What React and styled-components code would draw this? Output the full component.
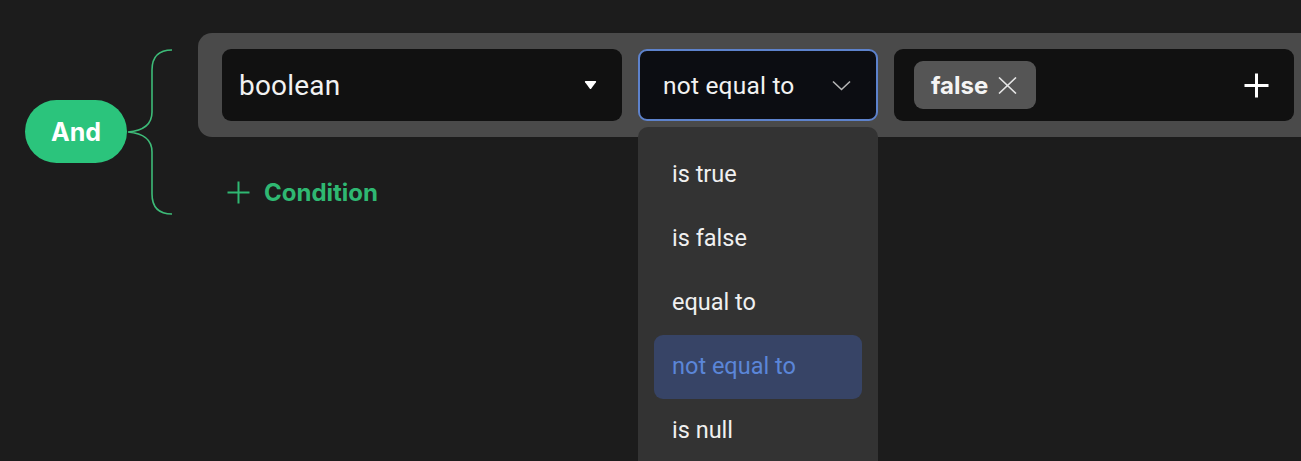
import React from "react";
import styled, { createGlobalStyle } from "styled-components";

const Global = createGlobalStyle`
  html, body { margin: 0; padding: 0; background: #1c1c1c; overflow: hidden; }
  body { font-family: Roboto, "Noto Sans", sans-serif; color: #fff; }
`;

const Page = styled.div`
  display: flex;
  align-items: flex-start;
  padding: 33px 0 0 25px;
  width: 1301px;
  height: 461px;
  box-sizing: border-box;
  overflow: hidden;
`;

const Pill = styled.div`
  margin-top: 67px;
  width: 102px;
  height: 63px;
  border-radius: 32px;
  background: #2bc47c;
  display: flex;
  align-items: center;
  justify-content: center;
  font-family: Inter, sans-serif;
  font-weight: 700;
  font-size: 25px;
  color: #fff;
  flex-shrink: 0;
`;

const Bracket = styled.svg`
  margin-top: 16px;
  flex-shrink: 0;
  display: block;
`;

const Group = styled.div`
  display: flex;
  flex-direction: column;
  flex-shrink: 0;
`;

const Panel = styled.div`
  display: flex;
  gap: 16px;
  padding: 16px 24px;
  background: #4a4a4a;
  border-radius: 14px;
  width: 1120px;
  box-sizing: border-box;
`;

const Box = styled.div`
  position: relative;
  height: 72px;
  width: ${(p) => p.$w}px;
  box-sizing: border-box;
  background: ${(p) => (p.$active ? "#0c0d12" : "#111")};
  border: ${(p) => (p.$active ? "2px solid #5d82cc" : "none")};
  border-radius: 9px;
  display: flex;
  align-items: center;
  padding: 0 ${(p) => p.$pr}px 0 ${(p) => p.$pl}px;
  justify-content: space-between;
`;

const FieldText = styled.span`
  font-size: ${(p) => p.$size}px;
  color: #f2f2f2;
  letter-spacing: 0.2px;
`;

const Chip = styled.div`
  height: 48px;
  box-sizing: border-box;
  padding: 0 19px 0 17px;
  background: #555;
  border-radius: 9px;
  display: flex;
  align-items: center;
  gap: 10px;
  font-family: Inter, sans-serif;
  font-weight: 700;
  font-size: 24px;
  color: #f4f4f4;
`;

const Menu = styled.div`
  position: absolute;
  left: -2px;
  top: 76px;
  width: 240px;
  height: 360px;
  background: #333;
  border-radius: 10px;
  padding: 16px;
  box-sizing: border-box;
  display: flex;
  flex-direction: column;
  z-index: 5;
`;

const Item = styled.div`
  height: 64px;
  flex-shrink: 0;
  border-radius: 9px;
  display: flex;
  align-items: center;
  padding-left: 18px;
  padding-bottom: 2px;
  box-sizing: border-box;
  font-size: 23.5px;
  color: ${(p) => (p.$selected ? "#5b86d8" : "#f0f0f0")};
  background: ${(p) => (p.$selected ? "#374466" : "transparent")};
`;

const AddRow = styled.div`
  margin-top: 41px;
  margin-left: 29px;
  display: flex;
  align-items: center;
  gap: 14px;
  font-family: Inter, sans-serif;
  font-weight: 700;
  font-size: 24px;
  color: #2fb872;
`;

const items = ["is true", "is false", "equal to", "not equal to", "is null"];

export default function App() {
  return (
    <>
      <Global />
      <Page>
        <Pill>And</Pill>
        <Bracket width="71" height="166" viewBox="127 49 71 166">
          <path
            d="M172 50 Q152 50 152 70 V112 Q152 130 128 132 Q152 134 152 152 V194 Q152 214 172 214"
            fill="none"
            stroke="#3dbb78"
            strokeWidth="1.6"
          />
        </Bracket>
        <Group>
          <Panel>
            <Box $w={400} $pl={17} $pr={25}>
              <FieldText $size={28}>boolean</FieldText>
              <svg width="13" height="10" viewBox="0 0 13 10">
                <path d="M1.6 1 H11.4 Q12.7 1 11.9 2.2 L7.3 8.4 Q6.5 9.4 5.7 8.4 L1.1 2.2 Q0.3 1 1.6 1 Z" fill="#fff" />
              </svg>
            </Box>
            <Box $w={240} $pl={23} $pr={25} $active>
              <FieldText $size={24.5}>not equal to</FieldText>
              <svg width="19" height="11" viewBox="0 0 19 11">
                <path d="M1 1.5 L9.5 9.5 L18 1.5" fill="none" stroke="#b5b5b5" strokeWidth="1.6" />
              </svg>
              <Menu>
                {items.map((t) => (
                  <Item key={t} $selected={t === "not equal to"}>{t}</Item>
                ))}
              </Menu>
            </Box>
            <Box $w={400} $pl={20} $pr={25}>
              <Chip>
                false
                <svg width="19" height="17" viewBox="0 0 19 17">
                  <path d="M1 0.5 L18 16.5 M18 0.5 L1 16.5" stroke="#e6e6e6" strokeWidth="1.6" fill="none" />
                </svg>
              </Chip>
              <svg width="25" height="25" viewBox="0 0 25 25">
                <path d="M12.5 0.5 V24.5 M0.5 12.5 H24.5" stroke="#fff" strokeWidth="3" fill="none" />
              </svg>
            </Box>
          </Panel>
          <AddRow>
            <svg width="23" height="23" viewBox="0 0 23 23">
              <path d="M11.5 0.5 V22.5 M0.5 11.5 H22.5" stroke="#2fb872" strokeWidth="2" fill="none" />
            </svg>
            Condition
          </AddRow>
        </Group>
      </Page>
    </>
  );
}
